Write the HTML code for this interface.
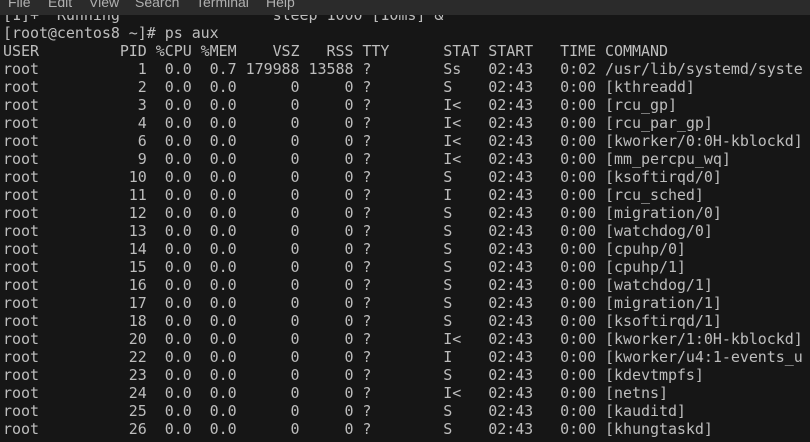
<!DOCTYPE html>
<html><head><meta charset="utf-8"><style>
html,body{margin:0;padding:0;width:810px;height:442px;overflow:hidden;background:#161616;}
#menu{position:absolute;left:0;top:0;width:810px;height:15px;background:#2b2b2b;overflow:hidden;z-index:2;}
#menu span{position:absolute;top:-6px;font:14px "Liberation Sans",sans-serif;color:#b0b0b0;}
#term{position:absolute;left:3px;top:6px;margin:0;font:15px/18px "DejaVu Sans Mono",monospace;letter-spacing:-0.045px;color:#bdbdbd;white-space:pre;}
</style></head><body>
<div id="menu"><span style="left:8px">File</span><span style="left:48px">Edit</span><span style="left:89px">View</span><span style="left:135px">Search</span><span style="left:196px">Terminal</span><span style="left:266px">Help</span></div>
<pre id="term">[1]+  Running                 sleep 1000 [10ms] &amp;
[root@centos8 ~]# ps aux
USER         PID %CPU %MEM    VSZ   RSS TTY      STAT START   TIME COMMAND
root           1  0.0  0.7 179988 13588 ?        Ss   02:43   0:02 /usr/lib/systemd/syste
root           2  0.0  0.0      0     0 ?        S    02:43   0:00 [kthreadd]
root           3  0.0  0.0      0     0 ?        I&lt;   02:43   0:00 [rcu_gp]
root           4  0.0  0.0      0     0 ?        I&lt;   02:43   0:00 [rcu_par_gp]
root           6  0.0  0.0      0     0 ?        I&lt;   02:43   0:00 [kworker/0:0H-kblockd]
root           9  0.0  0.0      0     0 ?        I&lt;   02:43   0:00 [mm_percpu_wq]
root          10  0.0  0.0      0     0 ?        S    02:43   0:00 [ksoftirqd/0]
root          11  0.0  0.0      0     0 ?        I    02:43   0:00 [rcu_sched]
root          12  0.0  0.0      0     0 ?        S    02:43   0:00 [migration/0]
root          13  0.0  0.0      0     0 ?        S    02:43   0:00 [watchdog/0]
root          14  0.0  0.0      0     0 ?        S    02:43   0:00 [cpuhp/0]
root          15  0.0  0.0      0     0 ?        S    02:43   0:00 [cpuhp/1]
root          16  0.0  0.0      0     0 ?        S    02:43   0:00 [watchdog/1]
root          17  0.0  0.0      0     0 ?        S    02:43   0:00 [migration/1]
root          18  0.0  0.0      0     0 ?        S    02:43   0:00 [ksoftirqd/1]
root          20  0.0  0.0      0     0 ?        I&lt;   02:43   0:00 [kworker/1:0H-kblockd]
root          22  0.0  0.0      0     0 ?        I    02:43   0:00 [kworker/u4:1-events_u
root          23  0.0  0.0      0     0 ?        S    02:43   0:00 [kdevtmpfs]
root          24  0.0  0.0      0     0 ?        I&lt;   02:43   0:00 [netns]
root          25  0.0  0.0      0     0 ?        S    02:43   0:00 [kauditd]
root          26  0.0  0.0      0     0 ?        S    02:43   0:00 [khungtaskd]
</pre>
</body></html>
